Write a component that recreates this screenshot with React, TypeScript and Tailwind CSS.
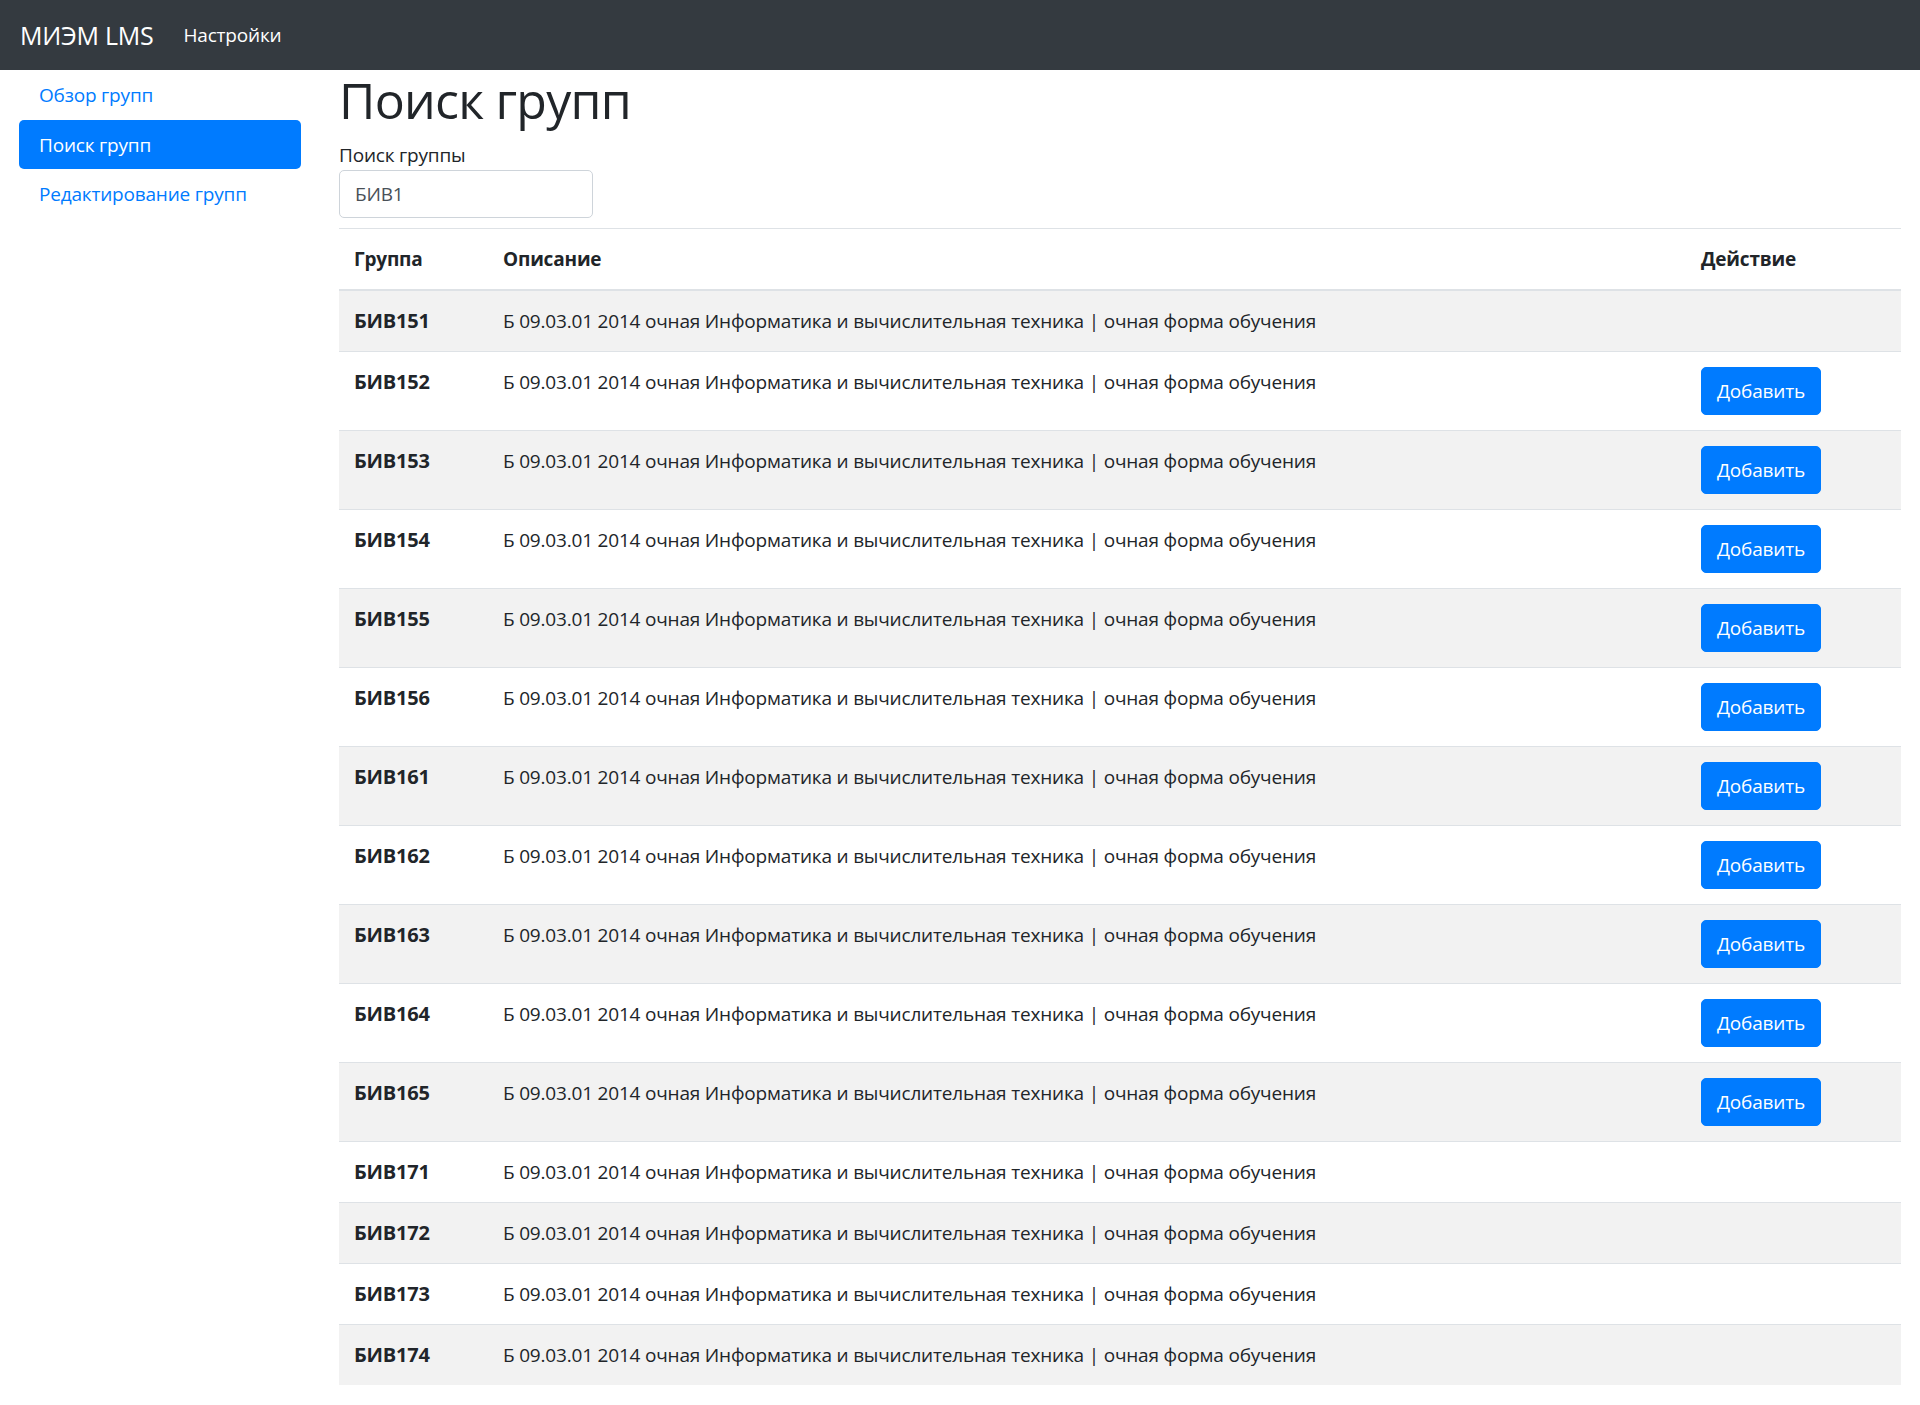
const groups = [
  { name: "БИВ151", canAdd: false },
  { name: "БИВ152", canAdd: true },
  { name: "БИВ153", canAdd: true },
  { name: "БИВ154", canAdd: true },
  { name: "БИВ155", canAdd: true },
  { name: "БИВ156", canAdd: true },
  { name: "БИВ161", canAdd: true },
  { name: "БИВ162", canAdd: true },
  { name: "БИВ163", canAdd: true },
  { name: "БИВ164", canAdd: true },
  { name: "БИВ165", canAdd: true },
  { name: "БИВ171", canAdd: false },
  { name: "БИВ172", canAdd: false },
  { name: "БИВ173", canAdd: false },
  { name: "БИВ174", canAdd: false },
];

const description =
  "Б 09.03.01 2014 очная Информатика и вычислительная техника | очная форма обучения";

function Navbar() {
  return (
    <nav className="flex h-[70px] items-center bg-[#343a40] px-5">
      <span className="mr-5 text-[25px] leading-[37px] tracking-[-0.01em] text-white">МИЭМ LMS</span>
      <a className="px-2.5 text-[19px] leading-[30px] tracking-[-0.01em] text-white">Настройки</a>
    </nav>
  );
}

function Sidebar() {
  const items = [
    { label: "Обзор групп", active: false },
    { label: "Поиск групп", active: true },
    { label: "Редактирование групп", active: false },
  ];
  return (
    <aside className="w-[320px] shrink-0 px-[19px]">
      <ul className="flex flex-col">
        {items.map((item) => (
          <li key={item.label}>
            <a
              className={
                item.active
                  ? "block rounded-[5px] bg-[#007bff] px-5 py-[9.5px] text-[19px] leading-[30px] tracking-[-0.01em] text-white"
                  : "block px-5 py-[10px] text-[19px] leading-[30px] tracking-[-0.01em] text-[#007bff]"
              }
            >
              {item.label}
            </a>
          </li>
        ))}
      </ul>
    </aside>
  );
}

export default function App() {
  return (
    <div className="min-h-screen bg-white font-['Open_Sans','Noto_Sans',sans-serif] text-[#212529]">
      <Navbar />
      <div className="flex">
        <Sidebar />
        <main className="min-w-0 flex-1 px-[19px]">
          <h1 className="mb-2.5 text-[50px] font-medium leading-[60px] tracking-[-0.015em]">Поиск групп</h1>
          <label className="block text-[19px] leading-[30px] tracking-[-0.01em]">Поиск группы</label>
          <input
            defaultValue="БИВ1"
            className="mb-2.5 h-[48px] w-[254px] rounded-[5px] border border-[#ced4da] px-[15px] text-[19px] tracking-[-0.01em] text-[#495057] outline-none"
          />
          <table className="w-full border-collapse text-[19px] leading-[30px] tracking-[-0.01em]">
            <thead>
              <tr>
                <th className="w-[149px] border-t border-b-2 border-[#dee2e6] p-[15px] text-left align-bottom font-bold">
                  Группа
                </th>
                <th className="border-t border-b-2 border-[#dee2e6] p-[15px] text-left align-bottom font-bold">
                  Описание
                </th>
                <th className="w-[215px] border-t border-b-2 border-[#dee2e6] p-[15px] text-left align-bottom font-bold">
                  Действие
                </th>
              </tr>
            </thead>
            <tbody>
              {groups.map((g) => (
                <tr key={g.name} className="odd:bg-[#f2f2f2]">
                  <td className="border-t border-[#dee2e6] p-[15px] align-top text-[20px] font-bold">{g.name}</td>
                  <td className="border-t border-[#dee2e6] p-[15px] align-top">{description}</td>
                  <td className="border-t border-[#dee2e6] p-[15px] align-top">
                    {g.canAdd && (
                      <button className="h-[48px] rounded-[5px] border border-[#007bff] bg-[#007bff] px-[15px] text-[19px] leading-[30px] tracking-[-0.01em] text-white">
                        Добавить
                      </button>
                    )}
                  </td>
                </tr>
              ))}
            </tbody>
          </table>
        </main>
      </div>
    </div>
  );
}
